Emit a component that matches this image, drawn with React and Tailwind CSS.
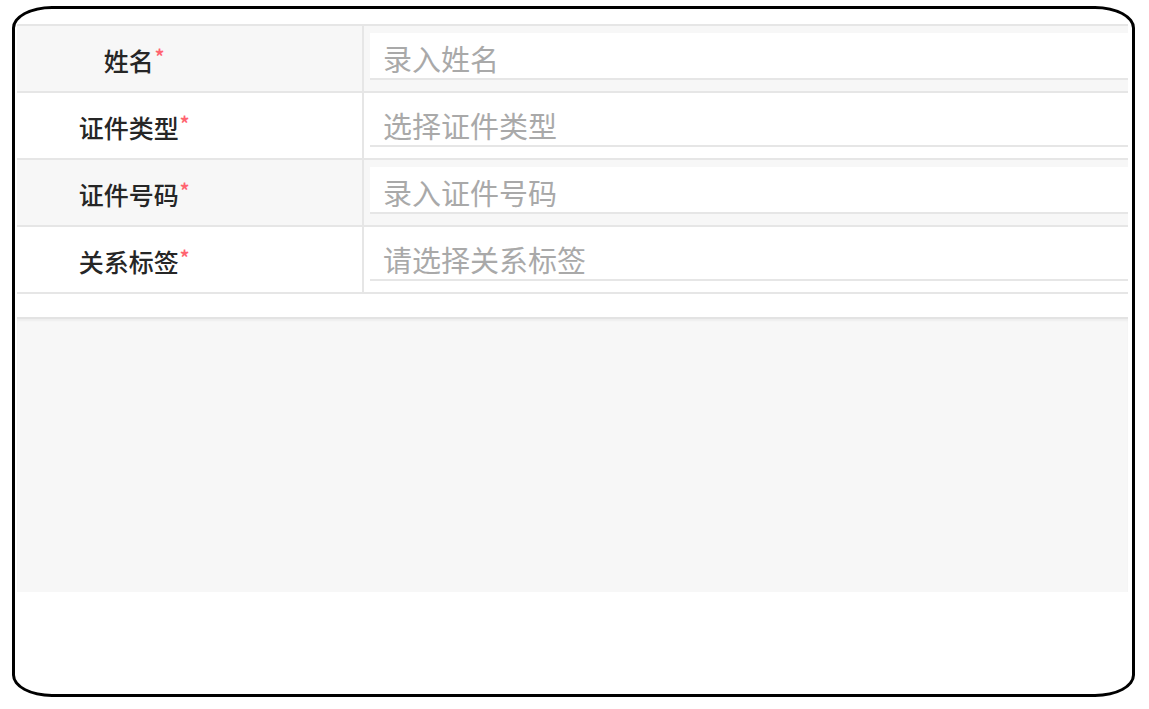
const fields = [
  { label: "姓名", placeholder: "录入姓名" },
  { label: "证件类型", placeholder: "选择证件类型" },
  { label: "证件号码", placeholder: "录入证件号码" },
  { label: "关系标签", placeholder: "请选择关系标签" },
];

const cjk = { fontFamily: '"Noto Sans CJK SC", "Noto Sans", sans-serif' };

function Row({ field, index }) {
  const bg = index % 2 === 0 ? "bg-[#f7f7f7]" : "bg-white";
  return (
    <div className={`flex h-[67px] border-t-2 border-[#e6e6e6] ${bg}`}>
      <div className="w-[347px] border-r-2 border-[#e6e6e6] flex items-center pt-[3px]">
        <div className="w-[234px] flex justify-center items-start">
          <span className="text-[25px] leading-none font-medium text-[#262626]">{field.label}</span>
          <span className="text-[19px] leading-none font-bold text-[#ff6470] -mt-[2px] ml-[1px]">*</span>
        </div>
      </div>
      <div className="flex-1 pl-[6px] pt-[7px]">
        <div className="h-[47px] bg-white border-b-2 border-[#e6e6e6] flex items-center pl-[13px] pt-[5px]">
          <span className="text-[29px] leading-none text-[#a9a9a9]">{field.placeholder}</span>
        </div>
      </div>
    </div>
  );
}

export default function App() {
  return (
    <div className="w-[1149px] h-[709px] bg-white pt-[6px] pl-[12px]" style={cjk}>
      <div className="w-[1123px] h-[691px] border-[3px] border-black rounded-[40px/22px] overflow-hidden pt-[15px] pl-[2px]">
        <div className="w-[1111px]">
          {fields.map((f, i) => (
            <Row key={f.label} field={f} index={i} />
          ))}
          <div className="h-[25px] border-t-2 border-[#e6e6e6] bg-white" />
          <div className="h-[275px] bg-[#f7f7f7] border-t-2 border-[#e3e3e3] shadow-[inset_0_2px_2px_rgba(0,0,0,0.04)]" />
        </div>
      </div>
    </div>
  );
}
